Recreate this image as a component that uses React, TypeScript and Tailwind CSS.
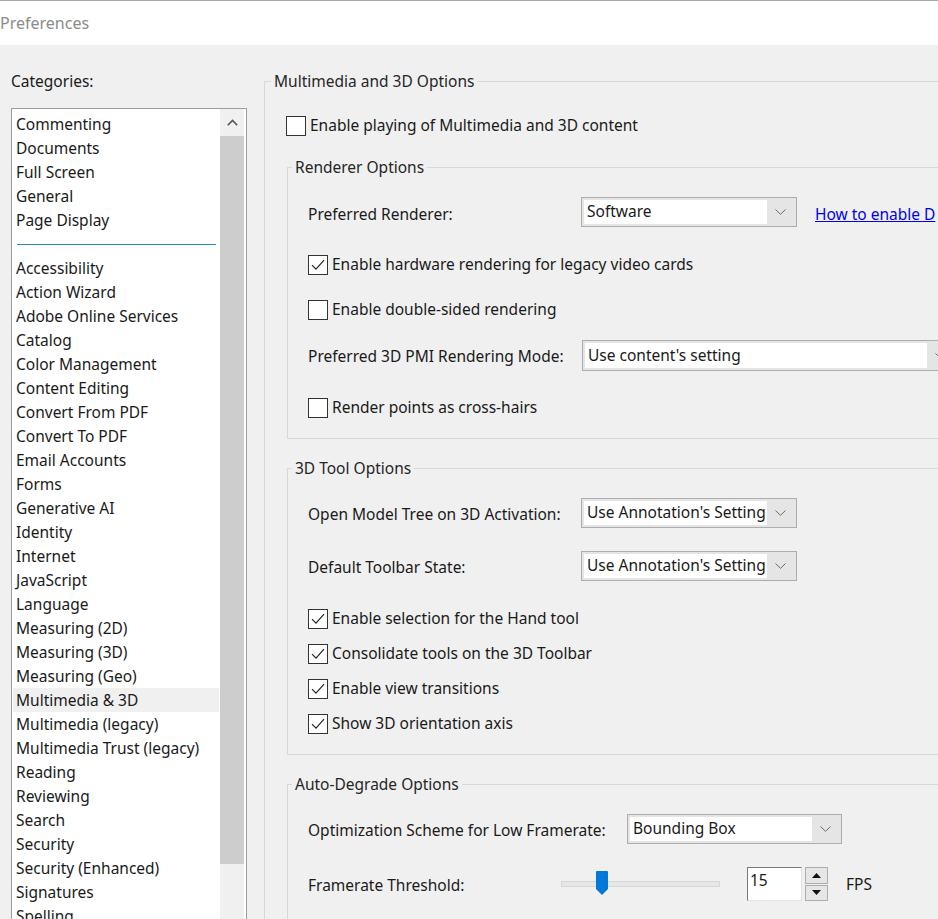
import React from 'react'

const topItems = ['Commenting', 'Documents', 'Full Screen', 'General', 'Page Display']
const otherItems = [
  'Accessibility', 'Action Wizard', 'Adobe Online Services', 'Catalog', 'Color Management',
  'Content Editing', 'Convert From PDF', 'Convert To PDF', 'Email Accounts', 'Forms',
  'Generative AI', 'Identity', 'Internet', 'JavaScript', 'Language', 'Measuring (2D)',
  'Measuring (3D)', 'Measuring (Geo)', 'Multimedia & 3D', 'Multimedia (legacy)',
  'Multimedia Trust (legacy)', 'Reading', 'Reviewing', 'Search', 'Security',
  'Security (Enhanced)', 'Signatures', 'Spelling',
]

const Chevron = () => (
  <svg width="11" height="6" viewBox="0 0 11 6" fill="none">
    <path d="M0.5 0.5 L5.5 5.3 L10.5 0.5" stroke="#6b6b6b" strokeWidth="1" />
  </svg>
)

const Checkbox = ({ checked, label }: { checked?: boolean; label: string }) => (
  <div className="flex items-center h-[30px]">
    <div className="w-[20px] h-[20px] border border-[#333333] bg-white flex items-center justify-center shrink-0">
      {checked && (
        <svg width="14" height="12" viewBox="0 0 14 12" fill="none">
          <path d="M1 6.2 L5 10.2 L13 1.2" stroke="#222222" strokeWidth="1.2" />
        </svg>
      )}
    </div>
    <span className="ml-[4px] whitespace-nowrap">{label}</span>
  </div>
)

const Select = ({ value, className }: { value: string; className: string }) => (
  <div className={`flex h-[30px] border border-[#adadad] bg-[#e5e5e5] p-[2px] shrink-0 ${className}`}>
    <div className="flex-1 bg-white flex items-center pl-[3px] whitespace-nowrap overflow-hidden">{value}</div>
    <div className="w-[27px] flex items-center justify-center">
      <Chevron />
    </div>
  </div>
)

const Group = ({ title, children, legendClass }: { title: string; children: React.ReactNode; legendClass: string }) => (
  <fieldset className="border border-[#d8d8d8] min-w-0">
    <legend className={`px-[3px] leading-[22px] text-[#262626] ${legendClass}`}>{title}</legend>
    {children}
  </fieldset>
)

export default function App() {
  return (
    <div
      className="w-[938px] h-[919px] overflow-hidden bg-[#f0f0f0] text-[15.5px] text-[#1a1a1a] flex flex-col"
      style={{ fontFamily: '"Noto Sans", "Open Sans", sans-serif' }}
    >
      {/* Title bar */}
      <div className="h-[45px] shrink-0 bg-white border-t border-[#a8a8a8] flex items-center">
        <span className="text-[16px] text-[#8c8c8c] leading-none">Preferences</span>
      </div>

      <div className="flex flex-1 min-h-0">
        {/* Categories */}
        <div className="w-[264px] shrink-0 pl-[11px] flex flex-col">
          <div className="mt-[25px] h-[24px] flex items-center">Categories:</div>
          <div className="mt-[15px] w-[236px] flex-1 border border-[#9d9d9d] border-b-0 bg-white flex pr-[2px]">
            <div className="w-[208px] pt-[3px]">
              {topItems.map(item => (
                <div key={item} className="h-[24px] mx-[1px] pl-[3px] flex items-center whitespace-nowrap">{item}</div>
              ))}
              <div className="h-[24px] flex items-center pl-[5px] pr-[4px]">
                <div className="h-px w-full bg-[#2b8bad]" />
              </div>
              {otherItems.map(item => (
                <div
                  key={item}
                  className={`h-[24px] mx-[1px] pl-[3px] flex items-center whitespace-nowrap ${item === 'Multimedia & 3D' ? 'bg-[#f0f0f0]' : ''}`}
                >
                  {item}
                </div>
              ))}
            </div>
            <div className="w-[24px] bg-[#f0f0f0] flex flex-col">
              <div className="h-[27px] flex items-center justify-center">
                <svg width="11" height="7" viewBox="0 0 11 7" fill="none">
                  <path d="M0.8 6.2 L5.5 1.5 L10.2 6.2" stroke="#555555" strokeWidth="1.6" />
                </svg>
              </div>
              <div className="h-[728px] bg-[#cdcdcd]" />
            </div>
          </div>
        </div>

        {/* Options */}
        <div className="flex-1 min-w-0 overflow-hidden">
          <div className="mt-[25px] w-[720px]">
            <Group title="Multimedia and 3D Options" legendClass="ml-[6px]">
              <div className="pl-[21px] mt-[19px]">
                <Checkbox label="Enable playing of Multimedia and 3D content" />
              </div>

              <div className="pl-[22px] mt-[15px]">
                <Group title="Renderer Options" legendClass="ml-[4px]">
                  <div className="pl-[20px] pb-[15px]">
                    <div className="flex items-center h-[30px] mt-[19px]">
                      <span className="w-[273px] shrink-0 pt-[6px]">Preferred Renderer:</span>
                      <Select value="Software" className="w-[216px]" />
                      <a className="ml-[18px] pt-[6px] text-[#0000ee] underline whitespace-nowrap">How to enable D</a>
                    </div>
                    <div className="mt-[23px]">
                      <Checkbox checked label="Enable hardware rendering for legacy video cards" />
                    </div>
                    <div className="mt-[15px]">
                      <Checkbox label="Enable double-sided rendering" />
                    </div>
                    <div className="flex items-center h-[31px] mt-[15px]">
                      <span className="w-[274px] shrink-0 pt-[2px]">Preferred 3D PMI Rendering Mode:</span>
                      <Select value="Use content's setting" className="w-[375px] h-[31px]" />
                    </div>
                    <div className="mt-[22px]">
                      <Checkbox label="Render points as cross-hairs" />
                    </div>
                  </div>
                </Group>

                <div className="mt-[18px]">
                  <Group title="3D Tool Options" legendClass="ml-[4px]">
                    <div className="pl-[20px] pb-[15px]">
                      <div className="flex items-center h-[30px] mt-[19px]">
                        <span className="w-[273px] shrink-0 pt-[3px]">Open Model Tree on 3D Activation:</span>
                        <Select value="Use Annotation's Setting" className="w-[216px]" />
                      </div>
                      <div className="flex items-center h-[30px] mt-[23px]">
                        <span className="w-[273px] shrink-0 pt-[3px]">Default Toolbar State:</span>
                        <Select value="Use Annotation's Setting" className="w-[216px]" />
                      </div>
                      <div className="mt-[23px] flex flex-col gap-[5px]">
                        <Checkbox checked label="Enable selection for the Hand tool" />
                        <Checkbox checked label="Consolidate tools on the 3D Toolbar" />
                        <Checkbox checked label="Enable view transitions" />
                        <Checkbox checked label="Show 3D orientation axis" />
                      </div>
                    </div>
                  </Group>
                </div>

                <div className="mt-[18px]">
                  <Group title="Auto-Degrade Options" legendClass="ml-[4px]">
                    <div className="pl-[20px] pb-[20px]">
                      <div className="flex items-center h-[30px] mt-[19px]">
                        <span className="w-[319px] shrink-0 pt-[4px]">Optimization Scheme for Low Framerate:</span>
                        <Select value="Bounding Box" className="w-[215px]" />
                      </div>
                      <div className="flex items-center h-[34px] mt-[23px]">
                        <span className="w-[253px] shrink-0 pt-[4px]">Framerate Threshold:</span>
                        <div className="relative w-[159px] h-[34px] flex items-center">
                          <div className="w-full h-[6px] bg-[#e7e7e7] border border-[#d6d6d6]" />
                          <svg className="absolute left-[35px] top-[4px]" width="12" height="24" viewBox="0 0 12 24">
                            <path d="M0 1 Q0 0 1 0 L11 0 Q12 0 12 1 L12 18 L6 24 L0 18 Z" fill="#0078d7" />
                          </svg>
                        </div>
                        <div className="ml-[27px] w-[55px] h-[34px] bg-white border border-[#e3e3e3] border-t-[#7a7a7a] border-l-[#7a7a7a] flex items-start pl-[2px] pt-[5px] leading-none">15</div>
                        <div className="ml-[3px] w-[23px] h-[34px] flex flex-col gap-[1px]">
                          <div className="flex-1 border border-[#adadad] bg-[#e6e6e6] flex items-center justify-center">
                            <svg width="9" height="5" viewBox="0 0 9 5"><path d="M0 5 L4.5 0 L9 5 Z" fill="#111111" /></svg>
                          </div>
                          <div className="flex-1 border border-[#adadad] bg-[#e6e6e6] flex items-center justify-center">
                            <svg width="9" height="5" viewBox="0 0 9 5"><path d="M0 0 L9 0 L4.5 5 Z" fill="#111111" /></svg>
                          </div>
                        </div>
                        <span className="ml-[18px] pt-[2px]">FPS</span>
                      </div>
                    </div>
                  </Group>
                </div>
              </div>
            </Group>
          </div>
        </div>
      </div>
    </div>
  )
}
